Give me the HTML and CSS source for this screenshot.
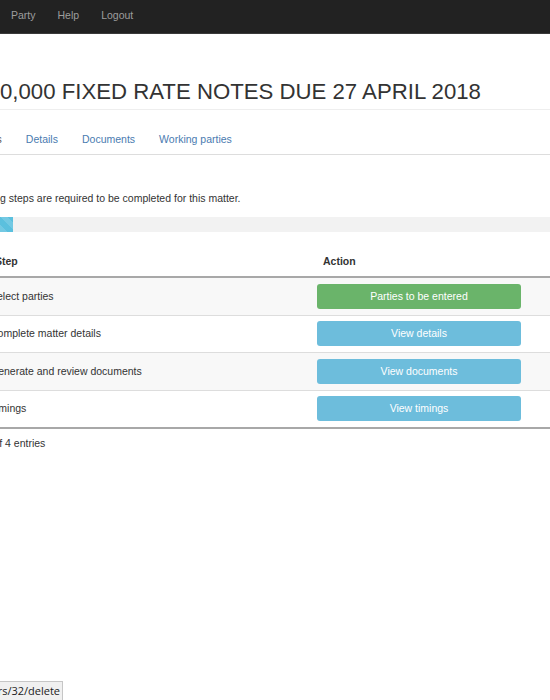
FILE: index.html
```html
<!DOCTYPE html>
<html lang="en">
<head>
<meta charset="utf-8">
<title>Matter steps</title>
<link rel="stylesheet" href="styles.css">
</head>
<body>
<nav class="navbar">
  <a class="nav-link" href="#">Party</a>
  <a class="nav-link" href="#">Help</a>
  <a class="nav-link" href="#">Logout</a>
</nav>
<main class="page">
  <header class="page-header">
    <h1 class="title">0,000 FIXED RATE NOTES DUE 27 APRIL 2018</h1>
  </header>
  <ul class="tabs">
    <li class="tab active"><a href="#">Steps</a></li>
    <li class="tab"><a href="#">Details</a></li>
    <li class="tab"><a href="#">Documents</a></li>
    <li class="tab"><a href="#">Working parties</a></li>
  </ul>
  <p class="intro">The following steps are required to be completed for this matter.</p>
  <div class="progress"><div class="progress-bar" style="width: 13px"></div></div>
  <table class="steps">
    <thead>
      <tr><th class="col-step">Step</th><th class="col-action">Action</th></tr>
    </thead>
    <tbody>
      <tr class="odd"><td class="cell-step">Select parties</td><td class="cell-action"><a class="btn btn-success" href="#">Parties to be entered</a></td></tr>
      <tr><td class="cell-step">Complete matter details</td><td class="cell-action"><a class="btn btn-info" href="#">View details</a></td></tr>
      <tr class="odd"><td class="cell-step">Generate and review documents</td><td class="cell-action"><a class="btn btn-info" href="#">View documents</a></td></tr>
      <tr><td class="cell-step">Timings</td><td class="cell-action"><a class="btn btn-info" href="#">View timings</a></td></tr>
    </tbody>
  </table>
  <div class="info">Showing 1 to 4 of 4 entries</div>
</main>
<div class="status">rs/32/delete</div>
</body>
</html>
```
FILE: styles.css
```css
html, body {
  margin: 0;
  padding: 0;
}
body {
  width: 550px;
  height: 700px;
  overflow: hidden;
  background: #fff;
  font-family: "Liberation Sans", Arial, sans-serif;
  font-size: 10.5px;
  line-height: 15px;
  color: #333;
  position: relative;
}
a { text-decoration: none; }

.navbar {
  height: 33px;
  background: #222;
  border-bottom: 1px solid #3a3a3a;
  display: flex;
  align-items: flex-start;
  padding-top: 0;
}
.nav-link {
  color: #9d9d9d;
  padding: 0 11px;
  line-height: 30px;
}

.page {
  display: flex;
  flex-direction: column;
}

.page-header {
  margin-top: 44px;
  padding-bottom: 4px;
  border-bottom: 1px solid #eee;
}
.title {
  margin: 0;
  font-size: 22.2px;
  font-weight: normal;
  line-height: 27px;
  color: #333;
  white-space: nowrap;
}

.tabs {
  list-style: none;
  margin: 14px 0 0 -37px;
  padding: 0;
  display: flex;
  border-bottom: 1px solid #ddd;
}
.tab a {
  display: block;
  padding: 8px 12px 7px;
  line-height: 15px;
  color: #4a7bb0;
  white-space: nowrap;
}
.tab.active a { color: #555; }

.intro {
  margin: 35px 0 0 -56px;
  line-height: 17px;
  white-space: nowrap;
}

.progress {
  margin-top: 10px;
  height: 15px;
  background: #f2f2f2;
  display: flex;
}
.progress-bar {
  height: 100%;
  background-color: #5bc0de;
  background-image: linear-gradient(45deg, rgba(255,255,255,.15) 25%, transparent 25%, transparent 50%, rgba(255,255,255,.15) 50%, rgba(255,255,255,.15) 75%, transparent 75%, transparent);
  background-size: 15px 15px;
}

.steps {
  margin: 15px 0 0 -18px;
  width: 568px;
  border-collapse: collapse;
  border-spacing: 0;
  table-layout: fixed;
}
.steps th {
  text-align: left;
  font-weight: bold;
  padding: 7px 8px 7px;
  line-height: 15px;
  border-bottom: 2px solid #a8a8a8;
}
.steps th.col-step { padding-left: 13px; width: 312px; }
.steps td {
  height: 36.5px;
  padding: 0 8px;
  border-top: 1px solid #ddd;
  vertical-align: middle;
}
.steps tbody tr:last-child td { border-bottom: 2px solid #a8a8a8; }
.steps tr.odd td { background: #f8f8f8; }
.steps td.cell-action { padding-left: 2px; }

.btn {
  display: block;
  width: 204px;
  height: 25px;
  line-height: 25px;
  text-align: center;
  color: #fff;
  border-radius: 3px;
}
.btn-success { background: #6ab46a; }
.btn-info { background: #6dbddc; }

.info {
  margin: 7px 0 0 -79px;
  white-space: nowrap;
}

.status {
  position: absolute;
  left: 0;
  bottom: 0;
  width: 63px;
  height: 19px;
  box-sizing: border-box;
  background: #f0f0f0;
  border-top: 1px solid #c6c6c6;
  border-right: 1px solid #c6c6c6;
  font-family: "Open Sans", "DejaVu Sans", sans-serif;
  font-size: 11px;
  line-height: 18px;
  color: #222;
  white-space: nowrap;
  overflow: hidden;
  direction: rtl;
  padding-right: 2px;
}
```
